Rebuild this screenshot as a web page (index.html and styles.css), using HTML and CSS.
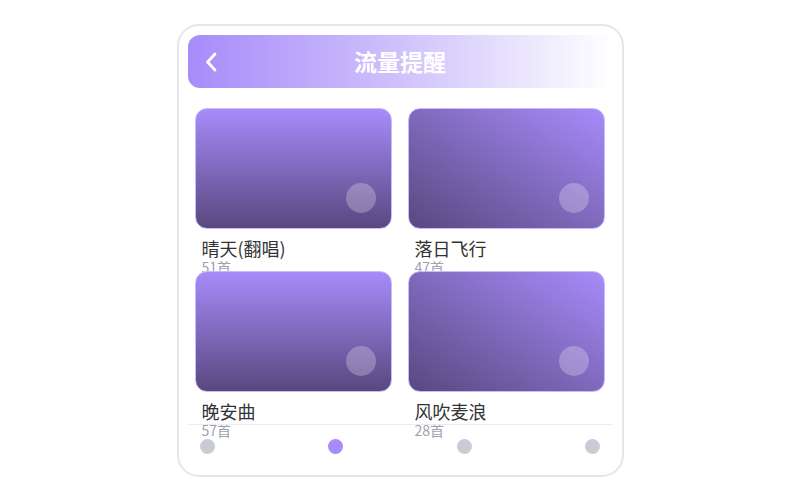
FILE: index.html
```html
<!DOCTYPE html>
<html lang="zh-CN">
<head>
    <meta charset="UTF-8">
    <meta name="viewport" content="width=device-width, initial-scale=1.0">
    <title>流量提醒</title>
    <link rel="stylesheet" href="styles.css">
</head>
<body>
    <div class="phone">
        <!-- Header -->
        <div class="header">
            <svg class="back" width="16" height="22" viewBox="0 0 16 22">
                <path d="M11 3 L3.5 11 L11 19" fill="none" stroke="#fff" stroke-width="2.8" stroke-linecap="round" stroke-linejoin="round"/>
            </svg>
            <h1>流量提醒</h1>
        </div>

        <!-- Playlist grid -->
        <div class="grid">
            <div class="item">
                <div class="cover cover-v"><span class="dot"></span></div>
                <div class="name">晴天(翻唱)</div>
                <div class="count">51首</div>
            </div>
            <div class="item">
                <div class="cover cover-d"><span class="dot"></span></div>
                <div class="name">落日飞行</div>
                <div class="count">47首</div>
            </div>
            <div class="item">
                <div class="cover cover-v"><span class="dot"></span></div>
                <div class="name">晚安曲</div>
                <div class="count">57首</div>
            </div>
            <div class="item">
                <div class="cover cover-d"><span class="dot"></span></div>
                <div class="name">风吹麦浪</div>
                <div class="count">28首</div>
            </div>
        </div>

        <!-- Tab bar -->
        <div class="tabbar">
            <span class="tab"></span>
            <span class="tab active"></span>
            <span class="tab"></span>
            <span class="tab"></span>
        </div>
    </div>
</body>
</html>
```

FILE: styles.css
```css
body {
    margin: 0;
    background-color: #ffffff;
    font-family: "Noto Sans CJK SC", "Noto Sans", sans-serif;
}
.phone {
    box-sizing: border-box;
    width: 447px;
    height: 453px;
    margin: 24px auto 0;
    padding: 9px 9px 0;
    border: 2px solid #e6e6ea;
    border-radius: 22px;
    background-color: #ffffff;
    display: flex;
    flex-direction: column;
}
.header {
    height: 53px;
    border-radius: 12px;
    background: linear-gradient(90deg, #a78bfa 0%, #cfc2fb 50%, #ffffff 100%);
    display: flex;
    align-items: center;
    position: relative;
}
.back {
    margin-left: 16px;
}
.header h1 {
    position: absolute;
    left: 0;
    right: 0;
    margin: 0;
    text-align: center;
    color: #ffffff;
    font-size: 23px;
    font-weight: bold;
    line-height: 53px;
}
.grid {
    height: 316px;
    margin-top: 20px;
    padding: 0 7px;
    display: grid;
    grid-template-columns: 197px 197px;
    grid-auto-rows: 155px;
    column-gap: 16px;
    row-gap: 8px;
}
.item {
    min-height: 0;
}
.cover {
    box-sizing: border-box;
    height: 121px;
    border: 1px solid #c9bbfb;
    border-radius: 12px;
    position: relative;
}
.cover-v {
    background: linear-gradient(180deg, #a78bfa, #58487f);
}
.cover-d {
    background: linear-gradient(to bottom left, #a78bfa, #58487f);
}
.dot {
    position: absolute;
    right: 15px;
    bottom: 15px;
    width: 30px;
    height: 30px;
    border-radius: 50%;
    background-color: rgba(255, 255, 255, 0.25);
}
.name {
    margin-top: 8px;
    padding-left: 7px;
    font-size: 18px;
    line-height: 23px;
    color: #333333;
}
.count {
    padding-left: 7px;
    font-size: 14px;
    line-height: 15px;
    color: #9ca3af;
}
.tabbar {
    height: 43px;
    border-top: 1px solid #ececf0;
    padding: 0 12px;
    display: flex;
    justify-content: space-between;
    align-items: center;
}
.tab {
    width: 15px;
    height: 15px;
    border-radius: 50%;
    background-color: #c8ccd4;
}
.tab.active {
    background-color: #a78bfa;
}
```
